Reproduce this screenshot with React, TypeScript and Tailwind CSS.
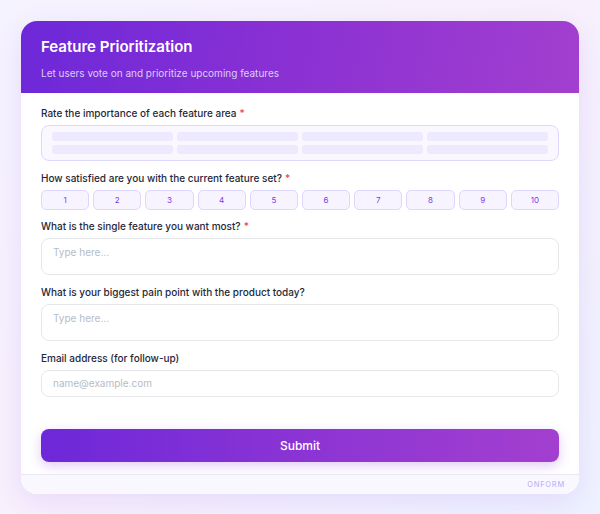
import React from "react";

const font = { fontFamily: "Inter, 'Noto Sans', sans-serif" };

function Label({ text, required }: { text: string; required?: boolean }) {
  return (
    <div className="text-[10px] leading-[12px] font-medium text-[#1f2937] mb-[6px]">
      {text}
      {required && <span className="text-[#ef4444] ml-[3px]">*</span>}
    </div>
  );
}

export default function App() {
  const cols = [0, 1, 2, 3];
  const nums = [1, 2, 3, 4, 5, 6, 7, 8, 9, 10];
  return (
    <div
      style={font}
      className="w-[600px] h-[514px] bg-[linear-gradient(135deg,#f5f3ff_0%,#f8f0fc_50%,#eef2ff_100%)] p-[21px]"
    >
      <div className="w-[558px] rounded-2xl bg-white overflow-hidden shadow-[0_8px_28px_rgba(124,58,237,0.12)]">
        <div className="h-[72px] bg-[linear-gradient(100deg,#6d28d9_0%,#8b31d3_50%,#a23fcf_100%)] px-[20px] pt-[16px]">
          <div className="text-[15px] leading-[20px] font-semibold text-white">Feature Prioritization</div>
          <div className="text-[10px] leading-[12px] text-[#dccdf7] mt-[10px]">
            Let users vote on and prioritize upcoming features
          </div>
        </div>
        <div className="px-[20px] pt-[14px] pb-[12px]">
          <Label text="Rate the importance of each feature area" required />
          <div className="h-[36px] rounded-lg border border-[#ddd6fe] bg-[#faf7ff] px-[10px] py-[6px] grid grid-cols-4 gap-x-[4px] gap-y-[4px]">
            {cols.map((c) => (
              <div key={"a" + c} className="h-[9px] rounded-[3px] bg-[#ede9fe]" />
            ))}
            {cols.map((c) => (
              <div key={"b" + c} className="h-[9px] rounded-[3px] bg-[#ede9fe]" />
            ))}
          </div>
          <div className="h-[11px]" />
          <Label text="How satisfied are you with the current feature set?" required />
          <div className="grid grid-cols-10 gap-[4px]">
            {nums.map((n) => (
              <div
                key={n}
                className="h-[20px] rounded-[5px] border border-[#ddd6fe] bg-[#f7f4ff] flex items-center justify-center text-[8px] text-[#7c3aed]"
              >
                {n}
              </div>
            ))}
          </div>
          <div className="h-[10px]" />
          <Label text="What is the single feature you want most?" required />
          <div className="h-[37px] rounded-lg border border-[#e5e7eb] px-[11px] pt-[7px] text-[10px] leading-[12px] text-[#b6bcc6]">
            Type here...
          </div>
          <div className="h-[11px]" />
          <Label text="What is your biggest pain point with the product today?" />
          <div className="h-[37px] rounded-lg border border-[#e5e7eb] px-[11px] pt-[7px] text-[10px] leading-[12px] text-[#b6bcc6]">
            Type here...
          </div>
          <div className="h-[11px]" />
          <Label text="Email address (for follow-up)" />
          <div className="h-[27px] mt-[1px] rounded-lg border border-[#e5e7eb] px-[11px] flex items-center text-[10px] text-[#b6bcc6]">
            name@example.com
          </div>
          <div className="h-[32px]" />
          <div className="h-[33px] rounded-lg bg-[linear-gradient(90deg,#6d28d9_0%,#8b34d4_50%,#a33fcf_100%)] flex items-center justify-center text-[12px] font-medium text-white shadow-[0_4px_12px_rgba(139,52,212,0.25)]">
            Submit
          </div>
        </div>
        <div className="h-[20px] border-t border-[#ebe7f5] bg-[#faf8ff] flex items-center justify-end pr-[14px]">
          <span className="text-[7.5px] tracking-[0.1em] font-medium text-[#c4b5fd]">ONFORM</span>
        </div>
      </div>
    </div>
  );
}
